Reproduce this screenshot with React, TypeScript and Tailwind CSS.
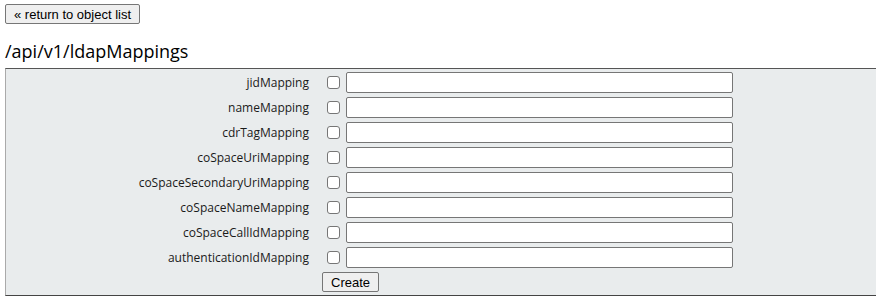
import React from "react";

const fields = [
  "jidMapping",
  "nameMapping",
  "cdrTagMapping",
  "coSpaceUriMapping",
  "coSpaceSecondaryUriMapping",
  "coSpaceNameMapping",
  "coSpaceCallIdMapping",
  "authenticationIdMapping",
];

export default function App() {
  return (
    <div
      className="w-[876px] h-[297px] overflow-hidden bg-white text-[#1a1a1a] pt-[4px] pl-[5px]"
      style={{ fontFamily: '"Open Sans", "Liberation Sans", sans-serif' }}
    >
      <button
        className="block h-[20px] px-[8px] text-[13px] leading-none border border-[#767676] rounded-[2px] bg-[#efefef] text-black"
        style={{ fontFamily: '"Liberation Sans", Arial, sans-serif' }}
      >
        « return to object list
      </button>
      <h1 className="mt-[14px] text-[18px] leading-[26px] text-black">/api/v1/ldapMappings</h1>
      <div className="mt-[4px] border-t border-b border-l border-t-[#555] border-b-[#444] border-l-[#aaa] bg-[#e9eced] pt-[1px] pb-[1px]">
        {fields.map((f) => (
          <div key={f} className="flex items-center h-[25px]">
            <div className="w-[303px] text-right text-[12px] leading-none">{f}</div>
            <div className="w-[18px]" />
            <div className="w-[13px] h-[13px] border border-[#767676] rounded-[3px] bg-white" />
            <div className="w-[6px]" />
            <div className="w-[387px] h-[21px] border border-[#767676] rounded-[2px] bg-white" />
          </div>
        ))}
        <div className="flex items-start h-[24px] pt-[2px]">
          <div className="w-[316px]" />
          <button
            className="h-[20px] px-[8px] text-[13px] leading-none border border-[#767676] rounded-[2px] bg-[#efefef] text-black"
            style={{ fontFamily: '"Liberation Sans", Arial, sans-serif' }}
          >
            Create
          </button>
        </div>
      </div>
    </div>
  );
}
